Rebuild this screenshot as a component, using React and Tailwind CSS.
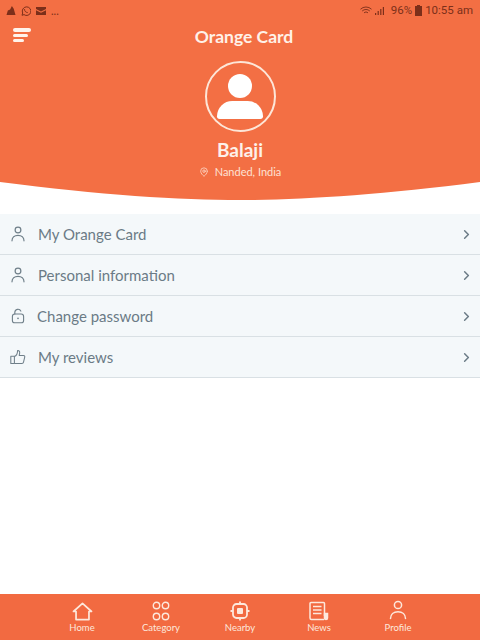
import { ChevronRight, MapPin } from "lucide-react";

const UserIcon = ({ className }) => (
  <svg viewBox="0 0 20 20" fill="none" stroke="currentColor" strokeWidth="1.5" className={className}>
    <circle cx="10" cy="5" r="3.6" />
    <path d="M2.5 18.5c0-4.2 3.2-6.8 7.5-6.8s7.5 2.6 7.5 6.8" strokeLinecap="round" />
  </svg>
);

const LockIcon = ({ className }) => (
  <svg viewBox="0 0 20 20" fill="none" stroke="currentColor" strokeWidth="1.4" className={className}>
    <rect x="3" y="7.5" width="14" height="11" rx="3" />
    <path d="M6 7.5V5.5a4 4 0 0 1 7.6-1.6" strokeLinecap="round" />
    <circle cx="10" cy="13" r="1" fill="currentColor" stroke="none" />
  </svg>
);

const ThumbIcon = ({ className }) => (
  <svg viewBox="0 0 20 20" fill="none" stroke="currentColor" strokeWidth="1.3" strokeLinejoin="round" className={className}>
    <path d="M1 9h4.5v9H1z" />
    <path d="M5.5 9.5c2.5-1 3.8-3.5 4-7.5 1.8-.4 2.8 1 2.6 3l-.6 3h5.2c1.3 0 2 1 1.7 2.2l-1.5 6.2c-.2 1-1 1.6-2 1.6H5.5" />
  </svg>
);

const HomeIcon = () => (
  <svg viewBox="0 0 22 20" fill="none" stroke="currentColor" strokeWidth="1.8" strokeLinejoin="round" className="h-[19px] w-[21px]">
    <path d="M1.5 10 11 1.5 20.5 10h-2.7v8.5H4.2V10z" />
  </svg>
);

const CategoryIcon = () => (
  <svg viewBox="0 0 20 20" fill="none" stroke="currentColor" strokeWidth="1.4" className="h-[20px] w-[20px]">
    <circle cx="5.5" cy="4.5" r="3.2" />
    <circle cx="14.5" cy="4.5" r="3.2" />
    <circle cx="5.5" cy="15.5" r="3.2" />
    <circle cx="14.5" cy="15.5" r="3.2" />
  </svg>
);

const NearbyIcon = () => (
  <svg viewBox="0 0 20 20" fill="none" stroke="currentColor" strokeWidth="1.8" className="h-[20px] w-[20px]">
    <rect x="3" y="3" width="14" height="14" rx="3.5" />
    <rect x="7" y="7" width="6" height="6" rx="1" fill="currentColor" stroke="none" />
    <path d="M10 0.5V3M10 17v2.5M0.5 10H3M17 10h2.5" />
  </svg>
);

const NewsIcon = () => (
  <svg viewBox="0 0 20 20" fill="none" stroke="currentColor" strokeWidth="1.5" className="h-[20px] w-[20px]">
    <path d="M15.5 15V2.5a1 1 0 0 0-1-1H2a1 1 0 0 0-1 1V17a1.5 1.5 0 0 0 1.5 1.5H15" />
    <path d="M4 5.5h8.5M4 9h8.5M4 12.5h8.5" />
    <path d="M15.5 12.5h3v4.5a1.5 1.5 0 0 1-3 0z" fill="currentColor" />
  </svg>
);

const menu = [
  { label: "My Orange Card", icon: UserIcon, pad: "pl-[38px]" },
  { label: "Personal information", icon: UserIcon, pad: "pl-[38px]" },
  { label: "Change password", icon: LockIcon, pad: "pl-[37px]" },
  { label: "My reviews", icon: ThumbIcon, pad: "pl-[38px]" },
];

const tabs = [
  { label: "Home", icon: HomeIcon },
  { label: "Category", icon: CategoryIcon },
  { label: "Nearby", icon: NearbyIcon },
  { label: "News", icon: NewsIcon },
  { label: "Profile", icon: () => <UserIcon className="mb-[3px] h-[20px] w-[20px]" /> },
];

const App = () => {
  return (
    <div className="flex h-[640px] w-[480px] flex-col overflow-hidden bg-white font-['Lato',sans-serif]">
      <header className="bg-[#f36f44]">
        <div className="flex h-[21px] items-center justify-between pl-[6px] pr-[7px] text-[#7c2f1a]">
          <div className="flex items-center gap-[5px]">
            <svg viewBox="0 0 10 10" fill="currentColor" className="h-[9px] w-[10px]">
              <path d="M0 10 1.5 5 4 4 6 0l2 3 2 7z" />
            </svg>
            <svg viewBox="0 0 10 10" fill="none" stroke="currentColor" strokeWidth="1" className="h-[10px] w-[10px]">
              <path d="M1 9.3 1.7 7A4.3 4.3 0 1 1 3 8.6z" />
              <path d="M3.5 3.2c0 2 1.3 3.2 3.2 3.4" />
            </svg>
            <svg viewBox="0 0 10 8" fill="currentColor" className="h-[8px] w-[10px]">
              <path d="M0 0h10v2L5 4.5 0 2zM0 3.2l5 2.5 5-2.5V8H0z" />
            </svg>
            <span className="text-[11px] leading-none">...</span>
          </div>
          <div className="flex items-center gap-[3px] font-['Roboto',sans-serif] text-[11.5px] leading-none">
            <svg viewBox="0 0 12 10" fill="none" stroke="currentColor" strokeWidth="0.9" className="h-[10px] w-[12px]">
              <path d="M0.5 3.2a8 8 0 0 1 11 0M2.2 5a5.5 5.5 0 0 1 7.6 0M4 6.8a3 3 0 0 1 4 0" />
            </svg>
            <svg viewBox="0 0 9 8" fill="currentColor" className="h-[8px] w-[9px]">
              <path d="M0 6h1.2v2H0zM2.6 4h1.2v4H2.6zM5.2 2h1.2v6H5.2zM7.8 0H9v8H7.8z" />
            </svg>
            <span className="ml-[4px]">96%</span>
            <svg viewBox="0 0 7 11" fill="currentColor" className="h-[11px] w-[7px]">
              <path d="M2 0h3v1h2v10H0V1h2z" />
            </svg>
            <span>10:55 am</span>
          </div>
        </div>

        <div className="relative flex h-[33px] items-center justify-center pb-[2px] pl-[8px]">
          {/* menu icon sits over the centred title */}
          <div className="absolute left-[13px] top-[7px] flex flex-col gap-[2px]">
            <div className="h-[4px] w-[18px] rounded-full bg-[#fff4ec]" />
            <div className="h-[3px] w-[15px] rounded-full bg-[#fff4ec]" />
            <div className="h-[3px] w-[11px] rounded-full bg-[#fff4ec]" />
          </div>
          <h1 className="text-[17.5px] font-bold leading-none text-[#fff1e8]">Orange Card</h1>
        </div>

        <div className="flex h-[127px] flex-col items-center pt-[7px]">
          <div className="flex h-[71px] w-[71px] flex-col items-center justify-center rounded-full border-2 border-[#fde6d8]">
            <div className="h-[24px] w-[24px] rounded-full bg-white" />
            <div className="mt-[3px] h-[18px] w-[46px] rounded-t-[23px] rounded-b-[4px] bg-white" />
          </div>
          <div className="mt-[6px] text-[19px] font-bold leading-[24px] text-[#fdf1ea]">Balaji</div>
          <div className="mt-[3px] flex items-center gap-[6px] text-[11px] leading-[14px] text-[#fde2d4]">
            <MapPin size={10} strokeWidth={1.8} />
            <span>Nanded, India</span>
          </div>
        </div>
      </header>

      <svg viewBox="0 0 480 20" preserveAspectRatio="none" className="block h-[20px] w-[480px] shrink-0">
        <path d="M0 0H480V1C380 14 300 19 240 19C180 19 100 14 0 1Z" fill="#f36f44" />
      </svg>

      <ul className="mt-[13px]">
        {menu.map((item) => {
          const Icon = item.icon;
          return (
            <li
              key={item.label}
              className="relative flex h-[41px] items-center justify-between border-b border-[#d9e0e4] bg-[#f4f8fa] pr-[6px]"
            >
              <Icon className="absolute left-[10px] top-[11px] h-[18px] w-[16px] text-[#6f7f89]" />
              <span className={`${item.pad} text-[15px] text-[#6b7b86]`}>{item.label}</span>
              <ChevronRight size={15} strokeWidth={2.4} className="text-[#6b7b86]" />
            </li>
          );
        })}
      </ul>

      <div className="flex-1" />

      <nav className="flex h-[46px] justify-center bg-[#f26a41] text-[#fde8dc]">
        {tabs.map((tab) => {
          const Icon = tab.icon;
          return (
            <div key={tab.label} className="flex w-[79px] flex-col items-center pt-[6px]">
              <div className="flex h-[22px] items-center">
                <Icon />
              </div>
              <span className="text-[9.5px] leading-[12px]">{tab.label}</span>
            </div>
          );
        })}
      </nav>
    </div>
  );
};

export default App;
